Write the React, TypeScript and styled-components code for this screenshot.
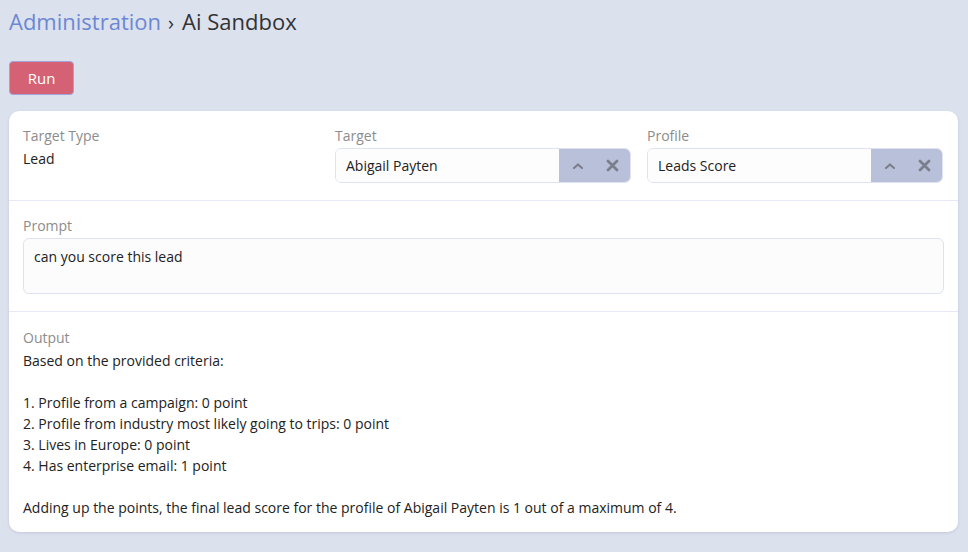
import React from 'react'
import styled, { createGlobalStyle } from 'styled-components'

const Global = createGlobalStyle`
  html, body {
    margin: 0;
    padding: 0;
    background: #dce1ee;
    font-family: "Open Sans", "Noto Sans", sans-serif;
    color: #2b2b2b;
  }
  * { box-sizing: border-box; }
`

const Page = styled.div`
  padding: 6px 10px 20px 9px;
  display: flex;
  flex-direction: column;
`

const Crumbs = styled.h1`
  margin: 0;
  font-size: 22px;
  font-weight: 400;
  line-height: 30px;
  color: #333;
  a {
    color: #6c88d2;
    text-decoration: none;
  }
  span {
    margin: 0 8px 0 7px;
    font-size: 20px;
  }
`

const Toolbar = styled.div`
  margin-top: 23px;
  display: flex;
`

const RunButton = styled.button`
  width: 65px;
  height: 34px;
  border: 1px solid #a3a3d8;
  border-radius: 4px;
  background: #d56274;
  color: #fff;
  font-family: inherit;
  font-size: 15px;
  cursor: pointer;
`

const Card = styled.div`
  margin-top: 16px;
  background: #fff;
  border-radius: 10px;
  box-shadow: 0 1px 3px rgba(60, 70, 110, 0.15);
  overflow: hidden;
`

const Section = styled.section<{ $last?: boolean }>`
  padding: ${(p) => (p.$last ? '15px 14px 14px' : '14px 14px 17px')};
  & + & {
    border-top: 1px solid #e6e9f5;
  }
`

const Grid = styled.div`
  display: grid;
  grid-template-columns: repeat(3, 296px);
  column-gap: 16px;
`

const Field = styled.div`
  display: flex;
  flex-direction: column;
`

const Label = styled.div`
  font-size: 14px;
  line-height: 21px;
  color: #8c8c8c;
  margin-bottom: 2px;
`

const Value = styled.div`
  font-size: 14px;
  line-height: 21px;
  color: #222;
`

const Select = styled.div`
  display: flex;
  height: 35px;
  border: 1px solid #dfe3f1;
  border-radius: 6px;
  overflow: hidden;
`

const SelectText = styled.div`
  flex: 1;
  display: flex;
  align-items: center;
  padding-left: 10px;
  font-size: 14px;
  color: #222;
  background: #fdfdfe;
`

const SelectActions = styled.div`
  width: 71px;
  background: #b9c0d9;
  display: flex;
  align-items: center;
  padding-left: 2px;
`

const IconBtn = styled.span`
  display: flex;
  flex: 1;
  justify-content: center;
  align-items: center;
  color: #7b7f8c;
`

const TextArea = styled.div`
  height: 56px;
  border: 1px solid #dde2f0;
  border-radius: 6px;
  background: #fcfcfd;
  padding: 7px 10px;
  font-size: 14px;
  line-height: 21px;
  color: #222;
`

const Output = styled.div`
  font-size: 14px;
  line-height: 21px;
  color: #222;
  white-space: pre-wrap;
`

const ChevronUp = () => (
  <svg width="12" height="8" viewBox="0 0 12 8">
    <path d="M2 6 L6 2.5 L10 6" fill="none" stroke="currentColor" strokeWidth="2.2" strokeLinecap="round" strokeLinejoin="round" />
  </svg>
)

const Cross = () => (
  <svg width="13" height="13" viewBox="0 0 13 13">
    <path d="M2 2 L11 11 M11 2 L2 11" fill="none" stroke="currentColor" strokeWidth="2.8" strokeLinecap="round" />
  </svg>
)

const SelectBox = ({ value }: { value: string }) => (
  <Select>
    <SelectText>{value}</SelectText>
    <SelectActions>
      <IconBtn><ChevronUp /></IconBtn>
      <IconBtn><Cross /></IconBtn>
    </SelectActions>
  </Select>
)

const outputText = `Based on the provided criteria:

1. Profile from a campaign: 0 point
2. Profile from industry most likely going to trips: 0 point
3. Lives in Europe: 0 point
4. Has enterprise email: 1 point

Adding up the points, the final lead score for the profile of Abigail Payten is 1 out of a maximum of 4.`

const App = () => {
  return (
    <>
      <Global />
      <Page>
        <Crumbs>
          <a href="#!">Administration</a>
          <span>›</span>Ai Sandbox
        </Crumbs>
        <Toolbar>
          <RunButton>Run</RunButton>
        </Toolbar>
        <Card>
          <Section>
            <Grid>
              <Field>
                <Label>Target Type</Label>
                <Value>Lead</Value>
              </Field>
              <Field>
                <Label>Target</Label>
                <SelectBox value="Abigail Payten" />
              </Field>
              <Field>
                <Label>Profile</Label>
                <SelectBox value="Leads Score" />
              </Field>
            </Grid>
          </Section>
          <Section>
            <Label>Prompt</Label>
            <TextArea>can you score this lead</TextArea>
          </Section>
          <Section $last>
            <Label>Output</Label>
            <Output>{outputText}</Output>
          </Section>
        </Card>
      </Page>
    </>
  )
}

export default App
